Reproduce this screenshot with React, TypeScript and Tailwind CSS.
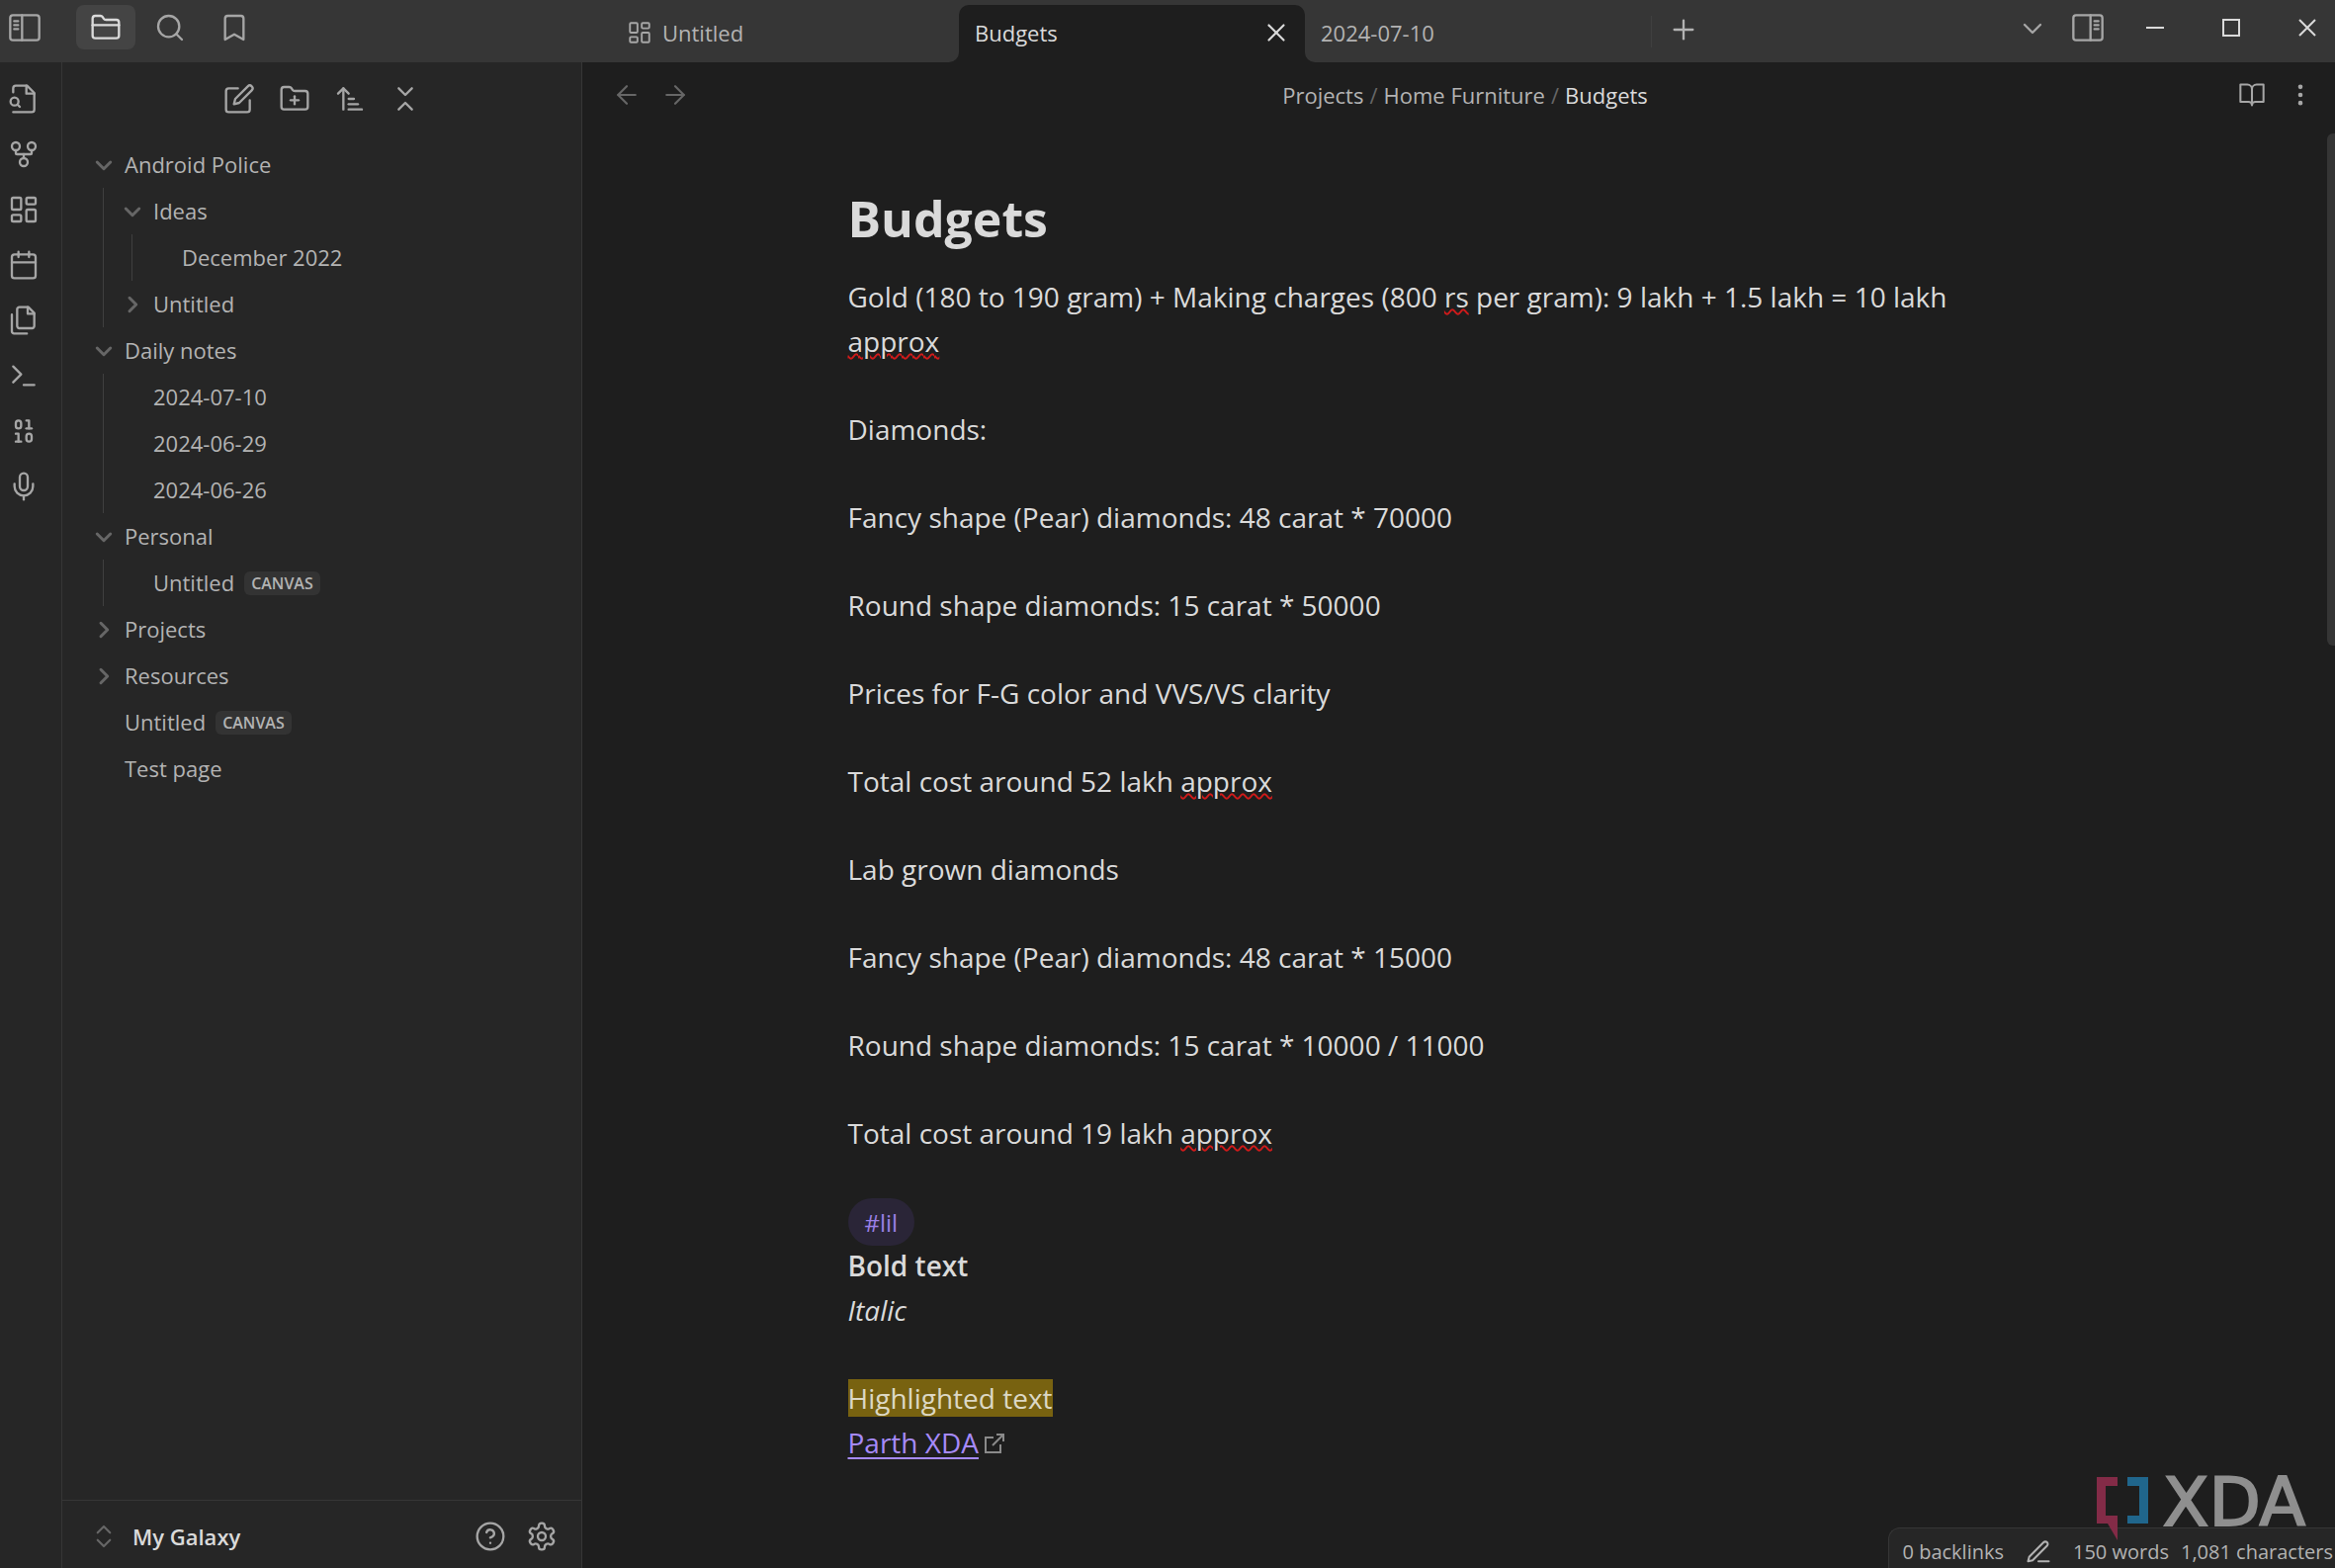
import type { ReactNode } from 'react';
import {
  ArrowLeft,
  ArrowRight,
  ArrowUpNarrowWide,
  Binary,
  Bookmark,
  ChevronDown,
  ChevronsDownUp,
  ChevronsUpDown,
  FolderClosed,
  FolderPlus,
  GitFork,
  LayoutDashboard,
  Mic,
  Plus,
  Search,
  X,
} from 'lucide-react';

type IconProps = { size?: number; strokeWidth?: number; className?: string };

const Svg = ({ size = 32, strokeWidth = 1.75, className, children }: IconProps & { children: ReactNode }) => (
  <svg
    width={size}
    height={size}
    viewBox="0 0 24 24"
    fill="none"
    stroke="currentColor"
    strokeWidth={strokeWidth}
    strokeLinecap="round"
    strokeLinejoin="round"
    className={className}
    aria-hidden="true"
  >
    {children}
  </svg>
);

const SidebarLeft = (props: IconProps) => (
  <Svg {...props}>
    <rect x="1" y="2.5" width="22" height="19" rx="2" />
    <path d="M10 2.5v19M4 7h3M4 10h3M4 13h3" />
  </Svg>
);

const SidebarRight = (props: IconProps) => (
  <Svg {...props}>
    <rect x="1" y="2.5" width="22" height="19" rx="2" />
    <path d="M14 2.5v19M17 7h3M17 10h3M17 13h3" />
  </Svg>
);

const FileSearch = (props: IconProps) => (
  <Svg {...props}>
    <path d="M4 22h14a2 2 0 0 0 2-2V7.5L14.5 2H6a2 2 0 0 0-2 2v3" />
    <path d="M14 2v6h6" />
    <circle cx="5" cy="14" r="3" />
    <path d="m9 18-1.5-1.5" />
  </Svg>
);

const CalendarIcon = (props: IconProps) => (
  <Svg {...props}>
    <rect x="3" y="4" width="18" height="18" rx="2" />
    <path d="M16 2v4M8 2v4M3 10h18" />
  </Svg>
);

const FilesIcon = (props: IconProps) => (
  <Svg {...props}>
    <path d="M15.5 2H8.6c-.4 0-.8.2-1.1.5-.3.3-.5.7-.5 1.1v12.8c0 .4.2.8.5 1.1.3.3.7.5 1.1.5h9.8c.4 0 .8-.2 1.1-.5.3-.3.5-.7.5-1.1V6.5L15.5 2z" />
    <path d="M3 7.6v12.8c0 .4.2.8.5 1.1.3.3.7.5 1.1.5h9.8" />
    <path d="M15 2v5h5" />
  </Svg>
);

const TerminalIcon = (props: IconProps) => (
  <Svg {...props}>
    <path d="m4 17 6-6-6-6M12 19h8" />
  </Svg>
);

const EditIcon = (props: IconProps) => (
  <Svg {...props}>
    <path d="M11 4H4a2 2 0 0 0-2 2v14a2 2 0 0 0 2 2h14a2 2 0 0 0 2-2v-7" />
    <path d="M18.5 2.5a2.121 2.121 0 0 1 3 3L12 15l-4 1 1-4 9.5-9.5z" />
  </Svg>
);

const BookIcon = (props: IconProps) => (
  <Svg {...props}>
    <path d="M2 3h6a4 4 0 0 1 4 4v14a3 3 0 0 0-3-3H2zM22 3h-6a4 4 0 0 0-4 4v14a3 3 0 0 1 3-3h7z" />
  </Svg>
);

const DotsIcon = (props: IconProps) => (
  <Svg {...props}>
    <circle cx="12" cy="5" r="1" />
    <circle cx="12" cy="12" r="1" />
    <circle cx="12" cy="19" r="1" />
  </Svg>
);

const HelpIcon = (props: IconProps) => (
  <Svg {...props}>
    <circle cx="12" cy="12" r="10" />
    <path d="M9.09 9a3 3 0 0 1 5.83 1c0 2-3 3-3 3M12 17h.01" />
  </Svg>
);

const GearIcon = (props: IconProps) => (
  <Svg {...props}>
    <path d="M12.22 2h-.44a2 2 0 0 0-2 2v.18a2 2 0 0 1-1 1.73l-.43.25a2 2 0 0 1-2 0l-.15-.08a2 2 0 0 0-2.73.73l-.22.38a2 2 0 0 0 .73 2.73l.15.1a2 2 0 0 1 1 1.72v.51a2 2 0 0 1-1 1.74l-.15.09a2 2 0 0 0-.73 2.73l.22.38a2 2 0 0 0 2.73.73l.15-.08a2 2 0 0 1 2 0l.43.25a2 2 0 0 1 1 1.73V20a2 2 0 0 0 2 2h.44a2 2 0 0 0 2-2v-.18a2 2 0 0 1 1-1.73l.43-.25a2 2 0 0 1 2 0l.15.08a2 2 0 0 0 2.73-.73l.22-.39a2 2 0 0 0-.73-2.73l-.15-.08a2 2 0 0 1-1-1.74v-.5a2 2 0 0 1 1-1.74l.15-.09a2 2 0 0 0 .73-2.73l-.22-.38a2 2 0 0 0-2.73-.73l-.15.08a2 2 0 0 1-2 0l-.43-.25a2 2 0 0 1-1-1.73V4a2 2 0 0 0-2-2z" />
    <circle cx="12" cy="12" r="3" />
  </Svg>
);

const PenIcon = (props: IconProps) => (
  <Svg {...props}>
    <path d="M12 20h9" />
    <path d="M16.5 3.5a2.121 2.121 0 0 1 3 3L7 19l-4 1 1-4z" />
  </Svg>
);

const ribbon = [
  { label: 'Open quick switcher', icon: FileSearch },
  { label: 'Open graph view', icon: GitFork },
  { label: 'Create new canvas', icon: LayoutDashboard },
  { label: "Open today's daily note", icon: CalendarIcon },
  { label: 'Insert template', icon: FilesIcon },
  { label: 'Open command palette', icon: TerminalIcon },
  { label: 'Open format converter', icon: Binary },
  { label: 'Start recording', icon: Mic },
];

const explorerActions = [
  { label: 'New note', icon: EditIcon },
  { label: 'New folder', icon: FolderPlus },
  { label: 'Change sort order', icon: ArrowUpNarrowWide },
  { label: 'Collapse all', icon: ChevronsDownUp },
];

type TreeNode = { name: string; canvas?: boolean; folder?: 'open' | 'closed'; children?: TreeNode[] };

const tree: TreeNode[] = [
  {
    name: 'Android Police',
    folder: 'open',
    children: [
      { name: 'Ideas', folder: 'open', children: [{ name: 'December 2022' }] },
      { name: 'Untitled', folder: 'closed' },
    ],
  },
  {
    name: 'Daily notes',
    folder: 'open',
    children: [{ name: '2024-07-10' }, { name: '2024-06-29' }, { name: '2024-06-26' }],
  },
  { name: 'Personal', folder: 'open', children: [{ name: 'Untitled', canvas: true }] },
  { name: 'Projects', folder: 'closed' },
  { name: 'Resources', folder: 'closed' },
  { name: 'Untitled', canvas: true },
  { name: 'Test page' },
];

const Typo = ({ children }: { children: ReactNode }) => (
  <span className="underline decoration-[#d01a1a] decoration-wavy decoration-2 underline-offset-1">{children}</span>
);

// Blank entries are the empty lines between paragraphs
const lines: ReactNode[] = [
  <>
    Gold (180 to 190 gram) + Making charges (800 <Typo>rs</Typo> per gram): 9 lakh + 1.5 lakh = 10 lakh
    <br />
    <Typo>approx</Typo>
  </>,
  null,
  'Diamonds:',
  null,
  'Fancy shape (Pear) diamonds: 48 carat * 70000',
  null,
  'Round shape diamonds: 15 carat * 50000',
  null,
  'Prices for F-G color and VVS/VS clarity',
  null,
  <>
    Total cost around 52 lakh <Typo>approx</Typo>
  </>,
  null,
  'Lab grown diamonds',
  null,
  'Fancy shape (Pear) diamonds: 48 carat * 15000',
  null,
  'Round shape diamonds: 15 carat * 10000 / 11000',
  null,
  <>
    Total cost around 19 lakh <Typo>approx</Typo>
  </>,
  null,
];

const TreeItem = ({ node }: { node: TreeNode }) => (
  <li>
    <button className="flex h-[47px] w-full items-center gap-3 pl-5 text-left">
      <span className="flex w-[18px] shrink-0 justify-center text-[#666666]">
        {node.folder && (
          <Svg size={18} strokeWidth={4} className={node.folder === 'closed' ? '-rotate-90' : ''}>
            <path d="M3 8 12 17 21 8" />
          </Svg>
        )}
      </span>
      <span>{node.name}</span>
      {node.canvas && (
        <span className="-ml-0.5 flex h-6 items-center rounded-md bg-[#333333] px-[7px] text-[16px] font-semibold">
          CANVAS
        </span>
      )}
    </button>
    {node.children && (
      <ul className="ml-7 border-l border-[#3f3f3f]">
        {node.children.map((child) => (
          <TreeItem key={child.name} node={child} />
        ))}
      </ul>
    )}
  </li>
);

const TitleBar = () => (
  <header className="flex h-[63px] shrink-0 bg-[#363636] text-[#a6a6a6]">
    <div className="flex w-[588px] shrink-0 items-start pt-[5px] pl-2">
      <button aria-label="Collapse left sidebar" className="flex h-[45px] w-[34px] items-center justify-center">
        <SidebarLeft />
      </button>
      <div className="flex gap-[5px] pl-[35px]">
        <button
          aria-label="Files"
          className="flex h-[45px] w-[60px] items-center justify-center rounded-lg bg-[#444444] text-[#dadada]"
        >
          <FolderClosed size={32} strokeWidth={1.75} />
        </button>
        <button aria-label="Search" className="flex h-[45px] w-[60px] items-center justify-center">
          <Search size={32} strokeWidth={1.75} />
        </button>
        <button aria-label="Bookmarks" className="flex h-[45px] w-[60px] items-center justify-center">
          <Bookmark size={32} strokeWidth={1.75} />
        </button>
      </div>
    </div>

    <div className="flex min-w-0 flex-1 items-end pl-8 text-[22px] text-[#b3b3b3]">
      <button className="flex h-[58px] w-[350px] items-center gap-2.5 px-[14px] pb-0.5 text-left">
        <LayoutDashboard size={26} strokeWidth={1.75} className="text-[#a6a6a6]" />
        Untitled
      </button>
      <div className="relative flex h-[58px] w-[350px] items-center justify-between rounded-t-[10px] bg-[#1e1e1e] px-4 pb-0.5 text-[#dadada] before:absolute before:bottom-0 before:-left-[10px] before:size-[10px] before:rounded-br-[10px] before:shadow-[3px_3px_0_3px_#1e1e1e] before:[clip-path:inset(0)] after:absolute after:-right-[10px] after:bottom-0 after:size-[10px] after:rounded-bl-[10px] after:shadow-[-3px_3px_0_3px_#1e1e1e] after:[clip-path:inset(0)]">
        <button>Budgets</button>
        <button aria-label="Close tab" className="-mr-0.5">
          <X size={30} strokeWidth={1.75} />
        </button>
      </div>
      <button className="h-[58px] w-[350px] px-4 pb-0.5 text-left">2024-07-10</button>
      <div className="flex h-[58px] items-start">
        <span className="mt-[11px] h-8 w-px bg-[#3f3f3f]" />
        <button aria-label="New tab" className="flex h-[50px] w-16 items-center justify-center">
          <Plus size={32} strokeWidth={1.75} />
        </button>
      </div>
    </div>

    <div className="flex items-start pt-[5px]">
      <button aria-label="Tab list" className="flex h-12 w-14 items-center justify-center">
        <ChevronDown size={32} strokeWidth={1.75} />
      </button>
      <button aria-label="Expand right sidebar" className="mr-3 flex h-[45px] w-14 items-center justify-center">
        <SidebarRight />
      </button>
      <div className="flex gap-[21px] text-[#dadada]">
        <button aria-label="Minimize" className="flex h-[45px] w-14 items-center justify-center">
          <svg width="18" height="18" viewBox="0 0 18 18" stroke="currentColor" strokeWidth="2">
            <path d="M0 9h18" />
          </svg>
        </button>
        <button aria-label="Maximize" className="flex h-[45px] w-14 items-center justify-center">
          <svg width="18" height="18" viewBox="0 0 18 18" fill="none" stroke="currentColor" strokeWidth="2">
            <path d="M1 1h16v16H1z" />
          </svg>
        </button>
        <button aria-label="Close" className="flex h-[45px] w-14 items-center justify-center">
          <svg width="18" height="18" viewBox="0 0 18 18" stroke="currentColor" strokeWidth="2">
            <path d="M1 1l16 16M17 1 1 17" />
          </svg>
        </button>
      </div>
    </div>
  </header>
);

const Ribbon = () => (
  <nav className="w-[63px] shrink-0 border-r border-[#363636] bg-[#262626] pt-[9px] text-[#a6a6a6]">
    {ribbon.map((item) => (
      <button key={item.label} aria-label={item.label} className="flex h-14 w-12 items-center justify-center">
        <item.icon size={32} strokeWidth={1.75} />
      </button>
    ))}
  </nav>
);

const Explorer = () => (
  <aside className="flex w-[526px] shrink-0 flex-col border-r border-[#363636] bg-[#262626] text-[#b3b3b3]">
    <div className="flex h-[73px] items-center justify-center text-[#a6a6a6]">
      {explorerActions.map((action) => (
        <button key={action.label} aria-label={action.label} className="flex h-12 w-14 items-center justify-center">
          <action.icon size={32} strokeWidth={1.75} />
        </button>
      ))}
    </div>
    <ul className="flex-1 pt-[7px] pl-[13px] text-[22px]">
      {tree.map((node, index) => (
        <TreeItem key={index} node={node} />
      ))}
    </ul>
    <div className="flex h-[69px] items-center border-t border-[#363636] pt-1 pr-[14px] pl-[27px] text-[#a6a6a6]">
      <button className="flex flex-1 items-center gap-3.5 text-left text-[22px] font-semibold text-[#dadada]">
        <ChevronsUpDown size={30} strokeWidth={1.75} className="text-[#666666]" />
        My Galaxy
      </button>
      <button aria-label="Help" className="flex w-[52px] justify-center">
        <HelpIcon />
      </button>
      <button aria-label="Settings" className="flex w-[52px] justify-center">
        <GearIcon />
      </button>
    </div>
  </aside>
);

const Editor = () => (
  <main className="flex min-w-0 flex-1 flex-col">
    <div className="flex h-[66px] shrink-0 items-center pr-[11px] pl-5 text-[#a6a6a6]">
      <button aria-label="Back" className="flex w-[49px] justify-center text-[#666666]">
        <ArrowLeft size={30} strokeWidth={1.75} />
      </button>
      <button aria-label="Forward" className="flex w-[49px] justify-center text-[#666666]">
        <ArrowRight size={30} strokeWidth={1.75} />
      </button>
      <nav className="flex flex-1 justify-center gap-1.5 pl-1 text-[22px] text-[#b3b3b3]">
        <a href="#projects">Projects</a>
        <span className="text-[#666666]">/</span>
        <a href="#home-furniture">Home Furniture</a>
        <span className="text-[#666666]">/</span>
        <span className="text-[#dadada]">Budgets</span>
      </nav>
      <button aria-label="Reading view" className="flex w-[49px] justify-center">
        <BookIcon size={28} />
      </button>
      <button aria-label="More options" className="flex w-[49px] justify-center">
        <DotsIcon size={28} strokeWidth={2} />
      </button>
    </div>

    <div className="relative min-h-0 flex-1 overflow-hidden">
      <div className="absolute top-1.5 right-0 h-[518px] w-2 rounded-l-md bg-[#353535]" />
      <article className="mx-auto max-w-[1236px] pt-[60px] text-[28px] leading-[45px] text-[#dadada]">
        <h1 className="mb-[25px] text-[50px] leading-[64px] font-bold">Budgets</h1>
        {lines.map((line, index) => (line ? <p key={index}>{line}</p> : <div key={index} className="h-11" />))}
        <p className="flex h-[45px] items-center">
          <a
            href="#lil"
            className="flex h-12 shrink-0 items-center rounded-full bg-[#2a2537] px-[17px] pt-0.5 text-[24px] text-[#9a7fe6]"
          >
            #lil
          </a>
        </p>
        <p className="font-semibold">Bold text</p>
        <p className="italic">Italic</p>
        <div className="h-11" />
        <p>
          <mark className="bg-[#786210] text-[#dcd8c4]">Highlighted text</mark>
        </p>
        <p className="flex items-center gap-1.5">
          <a href="#parth-xda" className="text-[#a68af9] underline decoration-2 underline-offset-4">
            Parth XDA
          </a>
          <svg width="20" height="20" viewBox="0 0 20 20" fill="none" stroke="#8a8a8a" strokeWidth="2" aria-hidden="true">
            <path d="M9 4H1v15h15v-8M12 1h7v7M19 1 8 12" />
          </svg>
        </p>
      </article>
    </div>
  </main>
);

const StatusBar = () => (
  <footer className="absolute right-0 bottom-0 flex h-[41px] items-center rounded-tl-xl border-t border-l border-[#363636] bg-[#262626] pt-2 pr-0.5 pl-[14px] text-[20px] text-[#b3b3b3]">
    <span>0 backlinks</span>
    <button aria-label="Editing view" className="flex w-[70px] justify-center">
      <PenIcon size={28} />
    </button>
    <span>150 words</span>
    <span className="ml-3">1,081 characters</span>
  </footer>
);

const Watermark = () => (
  <div className="absolute right-6 bottom-[28px] flex items-start gap-2 text-[#8f8f8f]">
    <svg width="53" height="64" viewBox="0 0 53 64" aria-hidden="true">
      <path d="M0 0h21v9H9v30h12v25L11 47H0z" fill="#832b47" />
      <path d="M31 0h21v47H31v-8h12V9H31z" fill="#20668c" />
    </svg>
    <span className="w-[156px] text-center font-['DejaVu_Sans'] text-[68px] leading-[52px] [-webkit-text-stroke:2px]">
      XDA
    </span>
  </div>
);

export default function App() {
  return (
    <div className="relative flex h-screen flex-col overflow-hidden bg-[#1e1e1e] font-['Open_Sans',sans-serif]">
      <TitleBar />
      <div className="flex min-h-0 flex-1">
        <Ribbon />
        <Explorer />
        <Editor />
      </div>
      <StatusBar />
      <Watermark />
    </div>
  );
}
